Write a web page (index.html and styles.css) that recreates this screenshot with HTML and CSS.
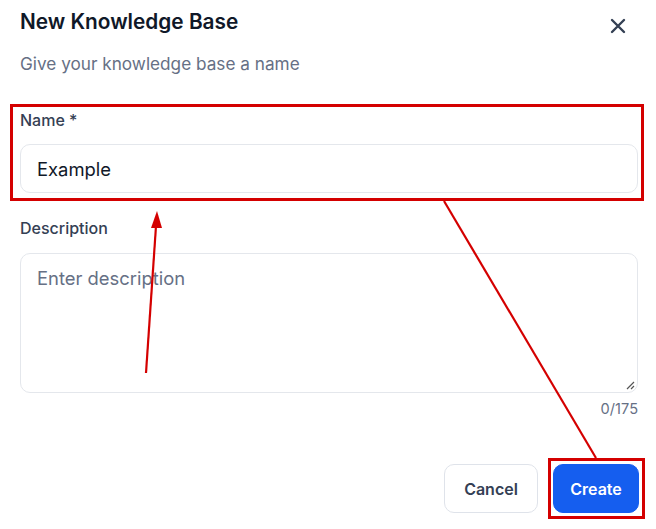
FILE: index.html
```html
<!DOCTYPE html>
<html lang="en">
<head>
<meta charset="utf-8">
<title>New Knowledge Base</title>
<link rel="stylesheet" href="styles.css">
</head>
<body>
<div class="dialog">
  <div class="header">
    <h1 class="title">New Knowledge Base</h1>
    <button class="close" aria-label="Close">
      <svg width="16" height="16" viewBox="0 0 16 16"><path d="M2 2L14 14M14 2L2 14" stroke="#344054" stroke-width="2.4" stroke-linecap="round"/></svg>
    </button>
  </div>
  <p class="subtitle">Give your knowledge base a name</p>

  <div class="field field-name">
    <label class="label">Name *</label>
    <div class="input">Example</div>
  </div>

  <div class="field field-desc">
    <label class="label">Description</label>
    <div class="textarea">
      <span class="placeholder">Enter description</span>
      <svg class="grip" width="9" height="9" viewBox="0 0 9 9"><path d="M1 8L8 1M5 8L8 5" stroke="#555" stroke-width="1.2"/></svg>
    </div>
    <div class="counter">0/175</div>
  </div>

  <div class="actions">
    <button class="btn btn-cancel">Cancel</button>
    <button class="btn btn-create">Create</button>
  </div>

  <svg class="annot" width="656" height="529" viewBox="0 0 656 529">
    <rect x="11.5" y="105.5" width="631" height="94" fill="none" stroke="#d40000" stroke-width="3"/>
    <rect x="549.5" y="459.5" width="94" height="58" fill="none" stroke="#d40000" stroke-width="3"/>
    <line x1="146" y1="373" x2="156" y2="226" stroke="#d40000" stroke-width="2.2"/>
    <polygon points="157,211 151,228 162,228" fill="#d40000"/>
    <line x1="444" y1="201" x2="596" y2="458" stroke="#d40000" stroke-width="2.2"/>
  </svg>
</div>
</body>
</html>
```
FILE: styles.css
```css
* { box-sizing: border-box; }
html, body { margin: 0; padding: 0; background: #fff; }
body { font-family: Inter, "Noto Sans", sans-serif; }
.dialog {
  position: relative;
  width: 656px;
  height: 529px;
  padding: 8px 18px 0 20px;
}
.header {
  display: flex;
  justify-content: space-between;
  align-items: flex-start;
}
.title {
  margin: 0;
  font-size: 20.8px;
  line-height: 28px;
  font-weight: 600;
  color: #101828;
}
.close {
  margin: 10px 12px 0 0;
  padding: 0;
  border: 0;
  background: none;
  width: 16px;
  height: 16px;
  display: flex;
}
.subtitle {
  margin: 16px 0 0 0;
  font-size: 17.2px;
  line-height: 24px;
  color: #667085;
}
.field-name { margin-top: 32px; }
.field-desc { margin-top: 23px; }
.label {
  display: block;
  font-size: 16px;
  line-height: 24px;
  font-weight: 500;
  color: #344054;
}
.input {
  margin-top: 12px;
  height: 49px;
  border: 1px solid #e4e7ec;
  border-radius: 10px;
  padding: 0 16px;
  display: flex;
  align-items: center;
  font-size: 18.4px;
  color: #101828;
}
.textarea {
  position: relative;
  margin-top: 13px;
  height: 140px;
  border: 1px solid #e4e7ec;
  border-radius: 10px;
  padding: 12px 16px;
  font-size: 18.4px;
  line-height: 24px;
}
.placeholder { color: #667085; }
.grip { position: absolute; right: 2px; bottom: 2px; }
.counter {
  margin-top: 6px;
  text-align: right;
  font-size: 14.6px;
  line-height: 20px;
  color: #667085;
}
.actions {
  margin-top: 45px;
  display: flex;
  justify-content: flex-end;
  gap: 15px;
  margin-right: -1px;
}
.btn {
  height: 49px;
  border-radius: 10px;
  font-family: Inter, "Noto Sans", sans-serif;
  font-size: 16px;
  font-weight: 600;
  cursor: pointer;
}
.btn-cancel {
  width: 94px;
  background: #fff;
  border: 1px solid #dfe3ea;
  color: #344054;
}
.btn-create {
  width: 86px;
  background: #155eef;
  border: 1px solid #155eef;
  color: #fff;
}
.annot {
  position: absolute;
  left: 0;
  top: 0;
  pointer-events: none;
}
```
